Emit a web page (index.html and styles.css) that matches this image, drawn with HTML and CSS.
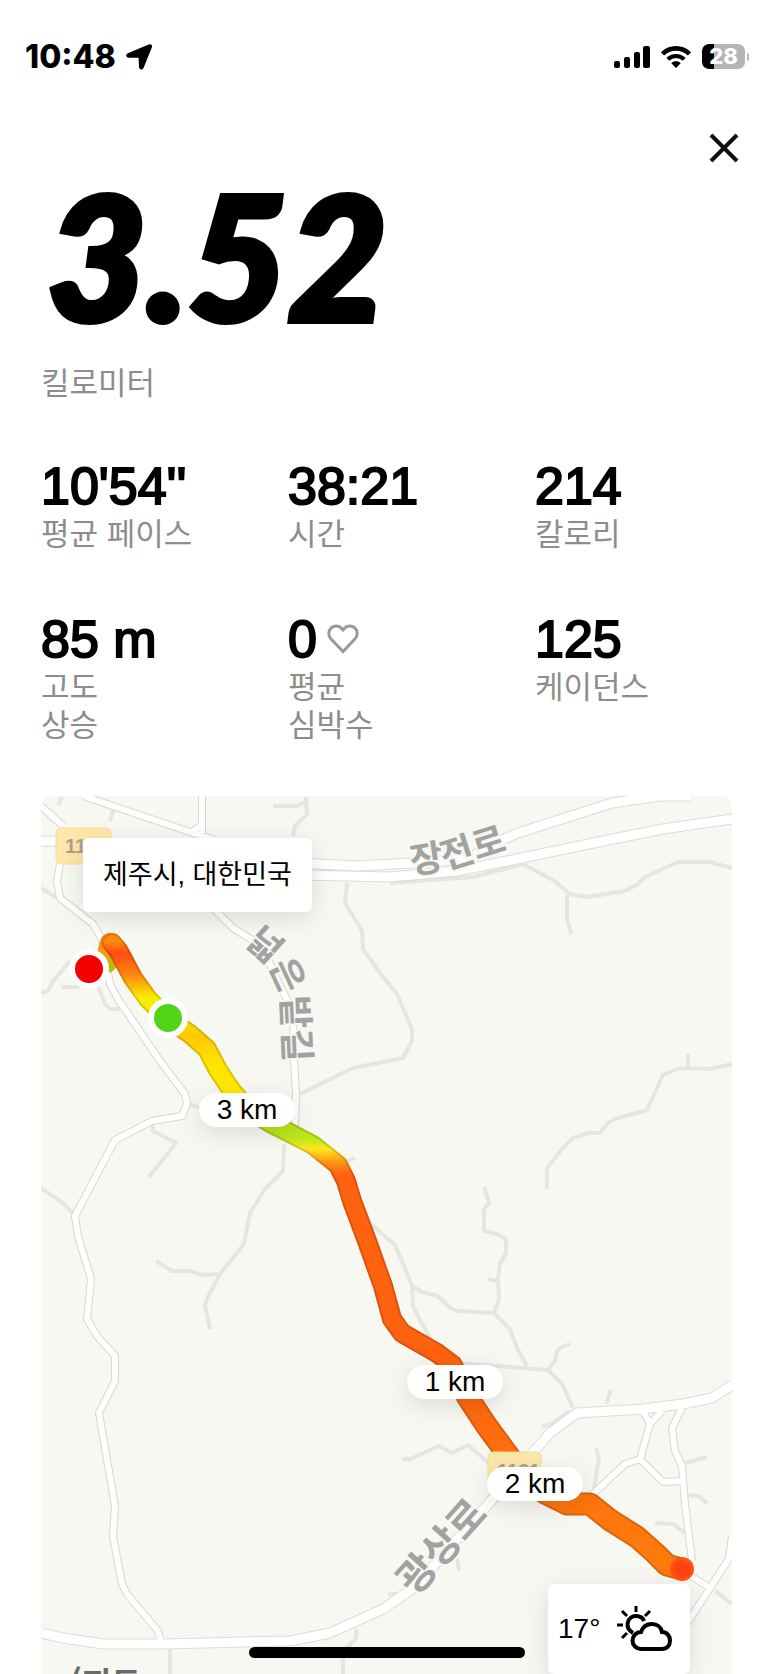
FILE: index.html
```
<!DOCTYPE html>
<html lang="ko">
<head>
    <meta charset="UTF-8">
    <title>러닝 기록</title>
    <meta name="viewport" content="width=device-width, initial-scale=1">
    <link rel="stylesheet" href="styles.css">
</head>
<body>
    <div class="app">
        <header class="status-bar">
            <div class="status-left">
                <span class="clock">10:48</span>
                <svg class="icon-location" viewBox="0 0 26 26" width="26" height="26">
                    <path d="M23 1.500C24.500 .8 25.500 1.800 24.900 3.200L16.600 23.500C16 25 14.200 24.800 14 23.200L13.500 13.500 12.500 12.700 2.500 12.700C.9 12.500 .8 10.900 2.200 10.200Z" stroke="#000" stroke-width="2" stroke-linejoin="round"/>
                </svg>
            </div>
            <div class="status-right">
                <svg class="icon-signal" viewBox="0 0 36 22" width="36" height="22">
                    <rect x="0" y="15" width="6" height="7" rx="2"/>
                    <rect x="10" y="11" width="6" height="11" rx="2"/>
                    <rect x="20" y="6" width="6" height="16" rx="2"/>
                    <rect x="29" y="0" width="7" height="22" rx="2"/>
                </svg>
                <svg class="icon-wifi" viewBox="0 0 32 24" width="32" height="24">
                    <path d="M2.500 8.800C10 1.600 22 1.600 29.500 8.800" fill="none" stroke="#000" stroke-width="4.600"/>
                    <path d="M7.800 14.300C12.500 9.900 19.500 9.900 24.200 14.300" fill="none" stroke="#000" stroke-width="4.200"/>
                    <path d="M11.300 18.200C14 15.700 18 15.700 20.700 18.200L16 23Z"/>
                </svg>
                <div class="battery"><span>28</span></div>
            </div>
        </header>

        <div class="top-actions">
            <button class="close" type="button" aria-label="닫기">
                <svg viewBox="0 0 30 30" width="30" height="30">
                    <path d="M2 2L28 28M28 2L2 28" stroke="#111" stroke-width="4" fill="none"/>
                </svg>
            </button>
        </div>

        <main class="content">
            <h1 class="distance">3.52</h1>
            <p class="label">킬로미터</p>

            <div class="stats">
                <div class="stat">
                    <div class="value">10'54''</div>
                    <div class="label">평균 페이스</div>
                </div>
                <div class="stat">
                    <div class="value">38:21</div>
                    <div class="label">시간</div>
                </div>
                <div class="stat">
                    <div class="value">214</div>
                    <div class="label">칼로리</div>
                </div>
                <div class="stat">
                    <div class="value">85 m</div>
                    <div class="label">고도<br>상승</div>
                </div>
                <div class="stat">
                    <div class="value">0
                        <svg class="heart" viewBox="0 0 32 30" width="32" height="30">
                            <path d="M16 27.500L4.300 15.300C1 11.800 1 7 4 4.100 7.200 1.200 12 1.500 14.700 4.500L16 6 17.300 4.500C20 1.500 24.800 1.200 28 4.100 31 7 31 11.800 27.700 15.300Z" fill="none" stroke="#999" stroke-width="3"/>
                        </svg>
                    </div>
                    <div class="label">평균<br>심박수</div>
                </div>
                <div class="stat">
                    <div class="value">125</div>
                    <div class="label">케이던스</div>
                </div>
            </div>

            <section class="map">
                <svg class="map-canvas" viewBox="41 795 691 879" preserveAspectRatio="xMinYMin slice">
                    <defs>
                        <linearGradient id="pace" gradientUnits="userSpaceOnUse" x1="0" y1="940" x2="0" y2="1570">
                            <stop offset="0" stop-color="#ff8a10"/>
                            <stop offset=".02" stop-color="#ff4c12"/>
                            <stop offset=".055" stop-color="#ff8a10"/>
                            <stop offset=".09" stop-color="#f7f000"/>
                            <stop offset=".125" stop-color="#f2e400"/>
                            <stop offset=".15" stop-color="#ffc800"/>
                            <stop offset=".19" stop-color="#ffe200"/>
                            <stop offset=".24" stop-color="#ffea00"/>
                            <stop offset=".285" stop-color="#b4e01c"/>
                            <stop offset=".315" stop-color="#bfe81a"/>
                            <stop offset=".33" stop-color="#ffe620"/>
                            <stop offset=".35" stop-color="#ff9a14"/>
                            <stop offset=".37" stop-color="#ff6210"/>
                            <stop offset=".65" stop-color="#ff620f"/>
                            <stop offset=".96" stop-color="#ff7a0c"/>
                            <stop offset="1" stop-color="#ff7a0c"/>
                        </linearGradient>
                        <linearGradient id="turn" gradientUnits="userSpaceOnUse" x1="0" y1="938" x2="0" y2="966">
                            <stop offset="0" stop-color="#ff7a10"/>
                            <stop offset=".5" stop-color="#f0a010"/>
                            <stop offset="1" stop-color="#b5bc10"/>
                        </linearGradient>
                        <radialGradient id="finish">
                            <stop offset=".4" stop-color="#ff4010"/>
                            <stop offset="1" stop-color="#ff5a10"/>
                        </radialGradient>
                        <path id="run" d="M112 942L118 949 133 977 148 998 167 1017 190 1033 207 1048 218 1069 232 1090 250 1110 270 1122 290 1132 313 1144 338 1164 346 1180 352 1200 367 1240 383 1285 392 1318 402 1332 437 1352 453 1364 467 1395 486 1424 505 1450 523 1474"/>
                        <path id="run-tail" d="M467 1395L486 1424 505 1450 523 1474 545 1492 567 1503 590 1503 610 1519 637 1536 655 1552 667 1564 681 1568"/>
                        <path id="names-upper" d="M412 873L451 867 514 847"/>
                        <path id="names-side" d="M243 943Q278 967 282 1000L285 1068"/>
                        <g id="roads">
                            <path d="M41 805L63 825M60 863L57 880 60 897 93 923 102 938 110 983 118 998 160 1060 185 1093 187 1103 182 1115 152 1120 115 1139 75 1215 78 1235 91 1278 87 1318 97 1335 115 1355 115 1380 99 1412 115 1505 113 1535 122 1583 127 1593 158 1630 161 1643"/>
                            <path d="M83 795L193 832 215 839M202 795V832M192 831L202 824M190 880L218 912 233 927 262 945 280 985 293 1010 294 1060 296 1093 295 1122 290 1136"/>
                            <path d="M643 1410L650 1423 640 1458 625 1463 593 1493M662 1410L648 1425M640 1458L663 1481 683 1480M682 1407L672 1427 675 1450 682 1465 685 1503 692 1560M688 1573L710 1587 732 1553M710 1587L682 1630M732 1535L729 1557"/>
                        </g>
                        <g id="highways">
                            <path d="M41 840H60M270 858L300 862 357 865 430 861 470 857 493 843 518 832 612 802 660 795H690"/>
                            <path d="M270 870L300 874 390 876 457 870 517 858 603 840 663 828 732 818"/>
                            <path d="M41 1632L63 1637 103 1643 163 1643 290 1640 330 1632 383 1608 415 1586 497 1493 550 1432 577 1412 643 1408 683 1403 712 1397 732 1384"/>
                        </g>
                    </defs>

                    <g class="paths">
                        <path d="M62 796L58 804M113 809L110 820M41 887L57 897M273 805H297L306 801M306 796L307 813 295 825 293 835"/>
                        <path d="M347 882L345 902 362 930 363 948 380 972 397 993 412 1028V1040L403 1057 353 1067 300 1093"/>
                        <path d="M41 992L48 990 53 980 70 960M62 986H80M98 985L105 1003 110 1008H120"/>
                        <path d="M390 882L473 876 523 863 553 879 570 893 587 896 625 890 638 883 645 876 678 861H710L732 867M567 893V918L571 933M688 1053V1066"/>
                        <path d="M732 1063L710 1068 687 1067 677 1068 663 1074 647 1109 615 1118 608 1122 600 1132H588L573 1137 562 1148 547 1167V1188"/>
                        <path d="M484 1186L489 1202 484 1208V1230L497 1233 506 1238V1252L500 1263 498 1277 499 1298 494 1312 510 1328 517 1347 527 1365M488 1278L497 1280M494 1312L458 1310 450 1307 438 1295 422 1291 412 1285"/>
                        <path d="M367 1220L395 1244 405 1267 412 1285 413 1305 422 1323 432 1340M460 1362L548 1369 562 1383 573 1407M548 1369L555 1360 557 1350 562 1346 570 1343"/>
                        <path d="M41 1187L63 1202 75 1214M153 1123V1130L176 1142 149 1176M190 1103L203 1108M343 1162L355 1157"/>
                        <path d="M284 1143L283 1170 265 1188 250 1212 244 1243 220 1273 207 1298 205 1305 210 1328M156 1260L172 1270H190L202 1274 220 1273"/>
                        <path d="M170 1648V1674M356 1628V1638L343 1650V1674M402 1458H410L439 1445 452 1452 468 1444 490 1463M388 1593H400M457 1557L459 1570"/>
                        <path d="M542 1426L553 1422 570 1410M611 1389L606 1403M596 1447L599 1457 594 1487M685 1462L707 1456M688 1494L698 1495 707 1502M655 1522L673 1523 685 1532M715 1590L732 1603"/>
                    </g>
                    <use href="#roads" class="road-edge"/>
                    <use href="#highways" class="highway-edge"/>
                    <use href="#roads" class="road"/>
                    <use href="#highways" class="highway"/>

                    <g class="shield">
                        <rect x="56" y="827" width="55" height="36" rx="5"/>
                        <text x="65" y="852">1132</text>
                    </g>

                    <g class="street">
                        <text><textPath href="#names-upper">장전로</textPath></text>
                        <text><textPath href="#names-side">넓은밭길</textPath></text>
                        <text class="street-large" transform="translate(415 1596) rotate(-48)">광상로</text>
                    </g>
                    <text class="place" x="70" y="1694">(지도</text>

                    <path d="M107 962L108 949 110 942" stroke="url(#turn)" class="run-edge"/>
                    <use href="#run" stroke="url(#pace)" class="run-edge"/>
                    <use href="#run" class="run-shade"/>
                    <use href="#run-tail" stroke="url(#pace)" class="run-edge wide"/>
                    <use href="#run-tail" class="run-shade wide"/>
                    <use href="#run" stroke="url(#pace)" class="run-core"/>
                    <use href="#run-tail" stroke="url(#pace)" class="run-core wide"/>
                    <circle cx="682" cy="1568" r="12" fill="url(#finish)"/>

                    <g class="shield">
                        <rect x="488" y="1451" width="53" height="36" rx="5"/>
                        <text x="497" y="1477">1131</text>
                    </g>

                    <circle class="dot" cx="89" cy="968" r="17" fill="#f40000"/>
                    <circle class="dot" cx="168" cy="1017" r="17" fill="#52d516"/>
                </svg>
                <div class="location">제주시, 대한민국</div>
                <div class="marker marker-3">3 km</div>
                <div class="marker marker-1">1 km</div>
                <div class="marker marker-2">2 km</div>
                <div class="weather">
                    <span>17°</span>
                    <svg viewBox="0 0 56 46" width="56" height="46" fill="none" stroke="#000" stroke-width="4">
                        <path d="M24 43A8.500 8.500 0 0 1 24 26C26 20 31 18 35 18 40 18 44 21 45 26 50 26 53 30 53 34.500 53 39.500 50 43 45 43Z"/>
                        <path d="M16 27C7 22 10 10 19 10 23 10 26 12 27 15"/>
                        <path d="M19 0V6M5 5L10 10M33 5L28 10M0 19H6M5 32L10 27" stroke-width="3"/>
                    </svg>
                </div>
            </section>
        </main>
        <div class="home-indicator"></div>
    </div>
</body>
</html>
```
FILE: styles.css
```
* { box-sizing: border-box; }
body { margin: 0; background: #fff; color: #000; font-family: "Liberation Sans", "Noto Sans CJK KR", Arial, sans-serif; }
svg { display: block; }
.app { height: 100vh; display: flex; flex-direction: column; overflow: hidden; }

.status-bar { display: flex; justify-content: space-between; align-items: center; padding: 40px 24px 0 25px; height: 73px; }
.status-left, .status-right { display: flex; align-items: center; gap: 10px; }
.clock { font-family: Inter, sans-serif; font-size: 32px; font-weight: 800; line-height: 32px; }
.battery { position: relative; width: 43px; height: 25px; margin-right: 4px; border-radius: 7px; background: linear-gradient(90deg, #000 28%, #b5b5b5 28%); color: #fff; font: 800 22px/25px Inter, sans-serif; text-align: center; }
.battery:after { content: ""; position: absolute; right: -4px; top: 9px; width: 2px; height: 8px; border-radius: 0 2px 2px 0; background: #b5b5b5; }

.top-actions { display: flex; justify-content: flex-end; padding: 50px 24px 0; }
.close { width: 50px; height: 50px; padding: 10px; border: 0; background: none; cursor: pointer; }

.content { flex: 1; display: flex; flex-direction: column; padding: 0 41px; min-height: 0; }
.distance { margin: 0 0 28px; padding-left: 6px; font-family: Lato, sans-serif; font-size: 172px; font-weight: 900; font-style: italic; line-height: 164px; -webkit-text-stroke: 6px #000; }
.label { margin: 0; font-size: 31px; line-height: 38px; color: #8d8d8d; }
.stats { display: grid; grid-template-columns: repeat(3, 1fr); gap: 55px 50px; margin: 53px 0 51px; }
.value { display: flex; align-items: center; gap: 10px; font-size: 52px; line-height: 60px; white-space: nowrap; -webkit-text-stroke: 2px #000; }

.map { position: relative; flex: 1; min-height: 0; border-radius: 12px 12px 0 0; overflow: hidden; background: #f7f8f2; }
.map-canvas { width: 100%; height: 100%; }
.map-canvas g, .map-canvas use { stroke-linejoin: round; }
.paths { fill: none; stroke: #e8e5e0; stroke-width: 4; }
.road-edge, .road, .highway-edge, .highway { fill: none; }
.road-edge { stroke: #d9d6d3; stroke-width: 8; }
.road { stroke: #fff; stroke-width: 6; }
.highway-edge { stroke: #dedbd8; stroke-width: 11; }
.highway { stroke: #fff; stroke-width: 9; }
.run-edge, .run-shade, .run-core { fill: none; stroke-linecap: round; stroke-linejoin: round; }
.run-edge { stroke-width: 20; }
.run-shade { stroke: #000; stroke-opacity: .14; stroke-width: 20; }
.run-core { stroke-width: 16; }
.run-edge.wide, .run-shade.wide { stroke-width: 23; }
.run-core.wide { stroke-width: 19; }
.dot { stroke: #fff; stroke-width: 6; }
.shield rect { fill: #fde7a9; stroke: #f6dc9c; }
.shield text { font: 700 20px "Liberation Sans", sans-serif; fill: #aaa38f; }
.street text { font: 700 36px "Noto Sans CJK KR", sans-serif; fill: #a2a2a2; stroke: #f7f8f2; stroke-width: 4px; paint-order: stroke; }
.street .street-large { font-size: 40px; }
.place { font: 700 32px "Noto Sans CJK KR", sans-serif; fill: #6b6b6b; }

.location, .marker, .weather { position: absolute; background: #fff; box-shadow: 0 6px 24px rgba(0, 0, 0, .12); }
.location { left: 42px; top: 42px; padding: 18px 20px; border-radius: 6px; font-size: 27px; line-height: 38px; }
.marker { width: 96px; border-radius: 17px; font-size: 28px; line-height: 34px; text-align: center; }
.marker-3 { left: 158px; top: 297px; }
.marker-1 { left: 366px; top: 569px; }
.marker-2 { left: 446px; top: 671px; }
.weather { right: 42px; bottom: 0; display: flex; align-items: center; justify-content: space-between; width: 142px; height: 90px; padding: 0 17px 0 10px; border-radius: 6px; font-size: 28px; }

.home-indicator { position: fixed; left: 50%; bottom: 16px; width: 276px; height: 11px; margin-left: -138px; border-radius: 6px; background: #000; }
```
